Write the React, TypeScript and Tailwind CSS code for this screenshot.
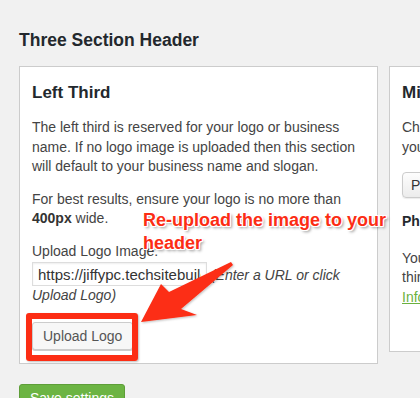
import React from "react";

const font = { fontFamily: '"Liberation Sans", Arial, Helvetica, sans-serif' };

export default function App() {
  return (
    <div
      className="relative w-[420px] h-[398px] overflow-hidden bg-[#f1f1f1] pt-[30px] pl-[19px] text-[#444]"
      style={font}
    >
      <h2 className="text-[17.5px] leading-[20px] font-bold text-[#23282d]">Three Section Header</h2>

      <div className="mt-[16px] flex items-start gap-[11px]">
        {/* Left card */}
        <div className="w-[359px] shrink-0 border border-[#cccccc] bg-white pt-[16px] pb-[13px] px-[12px]">
          <h3 className="text-[17px] leading-[20px] font-bold text-[#23282d]">Left Third</h3>
          <p className="mt-[15px] text-[14px] leading-[19.5px] whitespace-nowrap">
            The left third is reserved for your logo or business
            <br />
            name. If no logo image is uploaded then this section
            <br />
            will default to your business name and slogan.
          </p>
          <p className="mt-[13px] text-[14px] leading-[19.5px] whitespace-nowrap">
            For best results, ensure your logo is no more than
            <br />
            <b className="font-bold text-[#333]">400px</b> wide.
          </p>
          <div className="mt-[13px] text-[14px] leading-[19.5px]">Upload Logo Image:</div>
          <div className="mt-[1px] text-[14px] leading-[19.5px] whitespace-nowrap">
            <input
              readOnly
              value="https://jiffypc.techsitebuilder.com/wp-content/uploads/logo.png"
              className="inline-block align-baseline w-[175px] h-[24px] border border-[#dddddd] bg-white px-[5px] text-[15px] text-[#333] shadow-[inset_0_1px_2px_rgba(0,0,0,0.07)] outline-none"
              style={font}
            />{" "}
            <i className="italic">(Enter a URL or click</i>
            <br />
            <i className="italic">Upload Logo)</i>
          </div>
          <div className="mt-[16px]">
            <button className="h-[28px] px-[10px] rounded-[3px] border border-[#cccccc] bg-[#f7f7f7] text-[14px] leading-[26px] text-[#555] shadow-[0_1px_0_#cccccc]">
              Upload Logo
            </button>
          </div>
        </div>

        {/* Right card */}
        <div className="w-[359px] h-[286px] shrink-0 border border-[#cccccc] bg-white pt-[16px] px-[12px]">
          <h3 className="text-[17px] leading-[20px] font-bold text-[#23282d]">Middle Third</h3>
          <p className="mt-[15px] text-[14px] leading-[19.5px] whitespace-nowrap">
            Choose what to display in the middle third of
            <br />
            your header.
          </p>
          <div className="mt-[15px] inline-flex items-center h-[26px] px-[8px] rounded-[4px] border border-[#cccccc] bg-gradient-to-b from-[#fdfdfd] to-[#ececec] text-[14px] text-[#333] shadow-[0_1px_1px_rgba(0,0,0,0.08)]">
            Phone Number
          </div>
          <div className="mt-[14px] text-[14px] leading-[19.5px] font-bold text-[#23282d]">Phone Number</div>
          <p className="mt-[17px] text-[14px] leading-[19.5px] whitespace-nowrap">
            Your phone number will be displayed in the
            <br />
            third section of your header.
            <br />
            <a className="text-[#6bb13f] underline">Info</a>
          </p>
        </div>
      </div>

      <button className="mt-[20px] h-[28px] px-[10px] rounded-[3px] border border-[#5e9e38] bg-[#6cb443] text-[14px] leading-[26px] text-white">
        Save settings
      </button>

      {/* Annotation overlay */}
      <div className="absolute left-[26px] top-[313px] w-[112px] h-[48px] rounded-[3px] border-[6px] border-[#fc2d14] shadow-[1px_1px_2px_rgba(0,0,0,0.25)]" />
      <svg className="absolute left-0 top-0 pointer-events-none" width="420" height="398" viewBox="0 0 420 398">
        <defs>
          <filter id="sh" x="-20%" y="-20%" width="140%" height="140%">
            <feDropShadow dx="1" dy="1" stdDeviation="1" floodColor="#000" floodOpacity="0.25" />
          </filter>
        </defs>
        <polygon
          points="231,262 169,292 161,284 141,322 197,315 181,309 233,265"
          fill="#fc2d14"
          filter="url(#sh)"
        />
      </svg>
      <div
        className="absolute left-[143px] top-[208.7px] text-[18px] leading-[23.5px] font-bold text-[#fc2d14] whitespace-nowrap [text-shadow:1px_0_0_#fff,-1px_0_0_#fff,0_1px_0_#fff,0_-1px_0_#fff,1px_1px_0_#fff,-1px_-1px_0_#fff,1px_-1px_0_#fff,-1px_1px_0_#fff,2px_2px_3px_rgba(0,0,0,0.45)]"
      >
        Re-upload the image to your
        <br />
        header
      </div>
    </div>
  );
}
